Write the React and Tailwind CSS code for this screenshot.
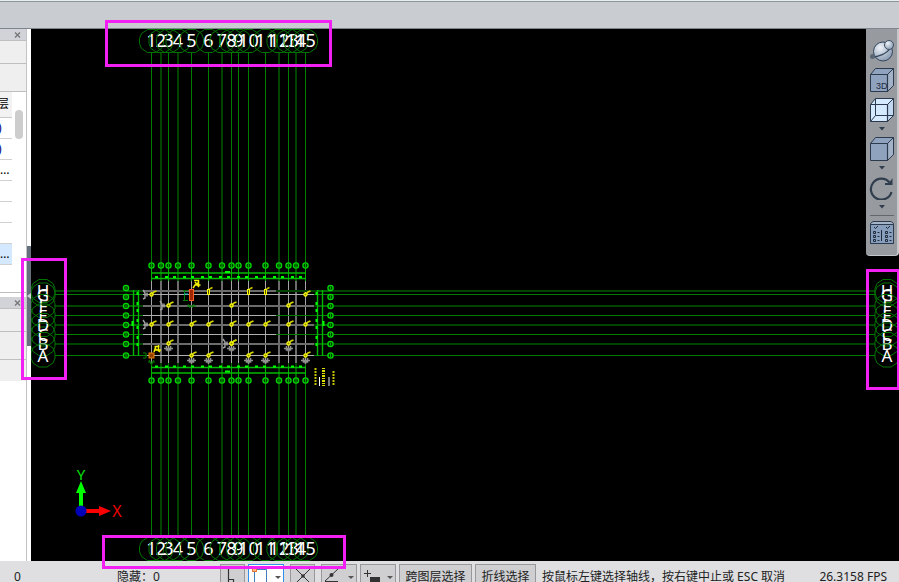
import React from "react";

const AXES_X = [
  { x: 151.5, name: "1" },
  { x: 161, name: "2", dim: true },
  { x: 168.5, name: "3" },
  { x: 178, name: "4", dim: true },
  { x: 191.5, name: "5" },
  { x: 208.5, name: "6" },
  { x: 222, name: "7", dim: true },
  { x: 231.5, name: "8" },
  { x: 238.5, name: "9" },
  { x: 248.5, name: "10" },
  { x: 265.5, name: "11" },
  { x: 279, name: "12", dim: true },
  { x: 288.5, name: "13" },
  { x: 296, name: "14", dim: true },
  { x: 305.5, name: "15" },
];

const AXES_Y = [
  { y: 291, name: "H", bubble: 288, dim: true },
  { y: 294.5, name: "G", bubble: 297 },
  { y: 306, name: "F", bubble: 306, dim: true },
  { y: 315.5, name: "E", bubble: 315.5 },
  { y: 325, name: "D", bubble: 325, dim: true },
  { y: 334.5, name: "C", bubble: 334.5 },
  { y: 344, name: "B", bubble: 344, dim: true },
  { y: 355.5, name: "A", bubble: 355.5 },
];

const COLUMNS = [
  [151, 294, "left"], [168, 305, "left"], [151, 324, "left"],
  [168, 324], [191, 324], [208, 324], [168, 343, "below"],
  [191, 355, "below"], [208, 355, "below"],
  [231, 305], [288, 305], [231, 324], [248, 324], [265, 324],
  [288, 324], [305, 324], [305, 294], [231, 343, "below"], [231, 343, "left"],
  [288, 343, "below"], [248, 355, "below"], [265, 355, "below"], [305, 355, "below"],
];

function AxisBubble({ cx, cy, name, size = 18 }) {
  return (
    <g>
      <text x={cx} y={cy + 6} fontSize={size} textAnchor="middle" fill="#ffffff">{name}</text>
      <path
        d={`M${cx - 4} ${cy - 11.5}h8l6 4l2 5v5l-2 5l-6 4h-8l-6 -4l-2 -5v-5l2 -5Z`}
        fill="none"
        stroke="#007400"
      />
    </g>
  );
}

function Dot({ cx, cy }) {
  return (
    <g>
      <circle cx={cx} cy={cy} r="2.6" fill="#003800" stroke="#00d800" strokeWidth="1.3" />
      <path d={`M${cx} ${cy - 1.5}v3`} stroke="#00b000" />
    </g>
  );
}

function Column({ x, y, side }) {
  return (
    <g>
      {side === "left" && (
        <path d={`M${x - 8} ${y - 4}l2 3v5l-2 1M${x - 7} ${y + 0.5}h4M${x - 4} ${y - 1.5}v4`} stroke="#a0a0a0" fill="none" strokeWidth="1.4" />
      )}
      {side === "below" && (
        <path d={`M${x - 4} ${y + 5.5}h9M${x - 1.5} ${y + 3}v4h4v-4M${x + 0.5} ${y + 5}v4`} stroke="#909090" fill="none" strokeWidth="1.6" />
      )}
      <path d={`M${x + 1} ${y}l2 -2l2.5 -1`} stroke="#d8d800" fill="none" strokeWidth="1.6" />
      <circle cx={x + 0.5} cy={y + 0.5} r="1.6" fill="#8c8c00" stroke="#ffff00" strokeWidth="1.2" />
    </g>
  );
}

function FloorPlan() {
  return (
    <g>
      {AXES_X.map((a) => (
        <g key={a.name}>
          <path d={`M${a.x} 53V537`} stroke={a.dim ? "#004400" : "#007c00"} strokeWidth={a.dim ? 2 : 1} />
          <path d={`M${a.x} 268V282M${a.x} 366V378`} stroke={a.dim ? "#007000" : "#00b400"} />
          <path d={`M${a.x} 281V363`} stroke={a.dim ? "#6c6c6c" : "#a4a4a4"} strokeWidth={a.dim ? 2 : 1} />
        </g>
      ))}
      {AXES_Y.map((a) => (
        <g key={a.name}>
          <path d={`M55 ${a.y}H875`} stroke={a.dim ? "#004400" : "#007c00"} strokeWidth={a.dim ? 2 : 1} />
          <path d={`M126 ${a.y}H139M317 ${a.y}H330`} stroke="#008c00" fill="none" />
          <path
            d={`M143 ${a.y}H${a.name === "E" || a.name === "C" || a.name === "H" ? 276 : 314}`}
            stroke={a.dim ? "#6c6c6c" : "#b0b0b0"}
            strokeWidth={a.dim ? 2 : 1}
          />
        </g>
      ))}
      <path d="M151 273H306M151 278.5H306M151 367.5H306M151 373H306" stroke="#00b800" strokeWidth="1.4" />
      <path d="M133.5 290V356M138.5 290V356M317.5 290V356M322.5 290V356" stroke="#00b800" strokeWidth="1.4" />
      <path d="M155 277h149M155 366.5h149" stroke="#00ff00" strokeWidth="2" strokeDasharray="3 7 3 5" />
      <path d="M137.5 292v61M316.5 292v61" stroke="#00ff00" strokeWidth="2" strokeDasharray="3 7 3 4" />
      <path d="M225 272h5M225 371.5h5M132.5 321v5M323.5 321v5" stroke="#00ff00" strokeWidth="2" />
      {AXES_X.map((a) => <Dot key={"t" + a.name} cx={a.x} cy={265.5} />)}
      {AXES_X.map((a) => <Dot key={"b" + a.name} cx={a.x} cy={380.5} />)}
      {AXES_Y.map((a) => <Dot key={"l" + a.name} cx={126} cy={a.bubble} />)}
      {AXES_Y.map((a) => <Dot key={"r" + a.name} cx={330.5} cy={a.bubble} />)}
      {COLUMNS.map(([x, y, side], i) => <Column key={i} x={x} y={y} side={side} />)}
      {[208.5, 248.5, 265.5].map((x) => (
        <g key={x}>
          <rect x={x - 1} y="289.5" width="2" height="5" fill="#555500" stroke="#ffff00" />
          <path d={`M${x + 1} 289l3 -1.5`} stroke="#c8c800" strokeWidth="1.4" />
        </g>
      ))}
      <rect x="189.5" y="289.5" width="4" height="11" fill="#a02800" stroke="#ff5a20" />
      <path d="M184.5 290v10M183 290.5h5M183 300.5h5M187 306h9M188 304l2 4M194 304l-2 4" stroke="#008000" fill="none" />
      <path d="M184 294h4" stroke="#00c8c8" />
      <path d="M193 288l2 -3l4 -3M194 280.5h5M195 282l4 5M198.5 280v6M194.5 285h6" stroke="#f0f000" fill="none" strokeWidth="1.5" />
      <rect x="149" y="353" width="5" height="5" fill="#904000" stroke="#f08000" />
      <path d="M143 353h3v5h-3M143 355.5h4M148 362h7M149 360l2 4M154 360l-2 4" stroke="#008000" fill="none" />
      <path d="M154 352l2 -6M154.5 346.5h5M156 349l4 3M158.5 345v6M155 350h6" stroke="#f0f000" fill="none" strokeWidth="1.5" />
      <path d="M315.5 368v18M333.5 371v15" stroke="#c4c400" strokeWidth="2" strokeDasharray="2 1" />
      <path d="M323.5 368v18" stroke="#e0e000" strokeWidth="3" strokeDasharray="1 1 2 1" />
      <path d="M319.5 377v9" stroke="#ffffff" />
      <path d="M329 377v9" stroke="#777777" strokeWidth="2" />
    </g>
  );
}

function Drawing() {
  return (
    <svg
      className="block h-full w-full"
      role="img"
      aria-label="轴网平面图"
      fontFamily="'Noto Sans', 'Open Sans', sans-serif"
    >
      <g transform="translate(-31 -29)">
        <FloorPlan />
        {AXES_X.map((a) => <AxisBubble key={"n" + a.name} cx={a.x} cy={41} name={a.name} />)}
        {AXES_X.map((a) => <AxisBubble key={"s" + a.name} cx={a.x} cy={549} name={a.name} />)}
        {AXES_Y.map((a) => <AxisBubble key={"w" + a.name} cx={43} cy={a.y} name={a.name} size={17} />)}
        {AXES_Y.map((a) => <AxisBubble key={"e" + a.name} cx={887} cy={a.y} name={a.name} size={17} />)}
        <path d="M79 507V493H76L81 481L86 493H83V507Z" fill="#00ff00" />
        <path d="M85 509H99V506L111 511L99 516V513H85Z" fill="#ff0000" />
        <circle cx="81" cy="511" r="5.5" fill="#0000b8" />
        <text x="81" y="480" fontSize="15" textAnchor="middle" fill="#00e000">Y</text>
        <text x="117" y="517" fontSize="16" textAnchor="middle" fill="#f00000">X</text>
      </g>
    </svg>
  );
}

function Caret() {
  return (
    <svg width="8" height="4" viewBox="0 0 8 4" className="shrink-0"><path d="M1 0H7L4 3.5Z" fill="#303d4d" /></svg>
  );
}

function Cube({ open, label }) {
  return (
    <svg width="26" height="26" viewBox="0 0 26 26">
      <path d="M1.5 7.5L6.5 1.5H24.5V18.5L18.5 24.5H1.5Z" fill={open ? "#d6eaff" : "#8fa3bf"} stroke="#2c3a4e" />
      <path d="M18.5 7.5L24.5 1.5V18.5L18.5 24.5Z" fill={open ? "#c2d8f0" : "#a3b2c6"} stroke="#2c3a4e" />
      <path d="M1.5 7.5H18.5V24.5" fill="none" stroke="#2c3a4e" strokeWidth="1.2" />
      {open && <path d="M6.5 1.5V18.5H24.5M6.5 18.5L1.5 24.5" fill="none" stroke="#2c3a4e" />}
      {label && <text x="7" y="22" fontSize="9" fontFamily="'Liberation Sans', sans-serif" fill="#1f2b3a">3D</text>}
    </svg>
  );
}

function ToolButton({ label, height, children }) {
  return (
    <button aria-label={label} className={`flex w-full items-center justify-center ${height}`}>{children}</button>
  );
}

function ViewToolbar() {
  return (
    <div className="absolute right-0 top-0 flex w-[33px] flex-col items-center rounded-b-sm border-r-2 border-b border-[#c5c7ca] bg-[#979a9f] pt-2">
      <ToolButton label="动态观察" height="h-7">
        <svg width="26" height="24" viewBox="0 0 26 24">
          <defs>
            <radialGradient id="ball" cx="35%" cy="30%" r="75%">
              <stop offset="0" stopColor="#eef3f9" />
              <stop offset="1" stopColor="#8799b0" />
            </radialGradient>
          </defs>
          <circle cx="14" cy="12.5" r="9.5" fill="url(#ball)" stroke="#34465c" />
          <path d="M3 18C9 18 18 15 22 8" fill="none" stroke="#34465c" strokeWidth="1.3" />
          <circle cx="3.5" cy="17.5" r="2.5" fill="#596674" />
          <circle cx="20" cy="6" r="4.5" fill="url(#ball)" stroke="#3e5066" />
        </svg>
      </ToolButton>
      <ToolButton label="三维视图" height="h-[30px]"><Cube label /></ToolButton>
      <ToolButton label="线框显示" height="h-[30px]"><Cube open /></ToolButton>
      <ToolButton label="更多显示方式" height="h-2"><Caret /></ToolButton>
      <ToolButton label="实体显示" height="h-[31px]"><Cube /></ToolButton>
      <ToolButton label="更多实体显示" height="h-2"><Caret /></ToolButton>
      <ToolButton label="旋转" height="h-[31px]">
        <svg width="26" height="24" viewBox="0 0 26 24">
          <path d="M20.5 6.5A10.5 10.5 0 1 0 22.5 16" fill="none" stroke="#303d4d" strokeWidth="2.2" />
          <path d="M23.5 2V9H16V7H20Z" fill="#303d4d" />
        </svg>
      </ToolButton>
      <ToolButton label="更多旋转方式" height="h-2"><Caret /></ToolButton>
      <div className="mt-1 h-px w-6 bg-[#63676c]" />
      <ToolButton label="显示设置" height="h-8">
        <svg width="26" height="24" viewBox="0 0 26 24">
          <path d="M1.5 3.5L4 1.5H22L24.5 3.5V23.5H1.5Z" fill="#a6b4c7" stroke="#2c3a4e" />
          <path d="M1.5 4.5H24.5V23.5H1.5Z" fill="#879ebd" stroke="#2c3a4e" />
          <path d="M5 7l1.5 1.5L9 6M17 7l1.5 1.5L21 6M12.5 10v11M8.5 12.5h2M8.5 16.5h2M8.5 20.5h2M20.5 12.5h2M20.5 16.5h2M20.5 20.5h2" fill="none" stroke="#1f2b3a" />
          <path d="M4.5 11.5h2v2h-2zM4.5 15.5h2v2h-2zM4.5 19.5h2v2h-2zM16.5 11.5h2v2h-2zM16.5 15.5h2v2h-2zM16.5 19.5h2v2h-2z" fill="none" stroke="#1f2b3a" />
        </svg>
      </ToolButton>
      <div className="h-[7px]" />
    </div>
  );
}

function PanelTitle() {
  return (
    <div className="flex h-3 shrink-0 items-center justify-end border-b border-[#bfbfbf] bg-[#d2d3d9]">
      <button aria-label="关闭" className="flex h-3 w-3 items-center justify-start">
        <svg width="7" height="6" viewBox="0 0 7 6"><path d="M1 0.5L6 5.5M6 0.5L1 5.5" stroke="#777777" strokeWidth="1.4" /></svg>
      </button>
    </div>
  );
}

const ROWS = ["paren", "paren", "dots", "", "", "", "selected"];

function Sidebar() {
  return (
    <aside className="flex w-[27px] shrink-0 flex-col overflow-hidden border-r border-[#c3c3c3] bg-white">
      <PanelTitle />
      <div className="h-[23px] border-b border-[#bfbfbf] bg-[#efefef]" />
      <div className="h-7 border-b border-[#bfbfbf] bg-[#efefef]" />
      <div className="flex h-[201px] shrink-0 border-b border-[#bfbfbf]">
        <table className="w-3 table-fixed border-collapse self-start">
          <thead>
            <tr className="h-[25px] border-b border-[#c8c8c8] bg-[#f2f2f2]">
              <th className="p-0 font-normal"><div className="flex justify-end pr-[3px]">层</div></th>
            </tr>
          </thead>
          <tbody>
            {ROWS.map((r, i) => (
              <tr key={i} className={`h-[21px] border-b border-[#d0d0d0] ${r === "selected" ? "bg-[#d4e9ff]" : ""}`}>
                <td className="p-0 leading-4">
                  {r === "paren" && <div className="-ml-0.5 text-[#000080]">)</div>}
                  {(r === "dots" || r === "selected") && <div className="text-black">…</div>}
                </td>
              </tr>
            ))}
          </tbody>
        </table>
        <div className="ml-[3px] mt-[18px] h-[29px] w-2 rounded-full bg-[#cdcdcd]" />
      </div>
      <div className="h-1 shrink-0" />
      <PanelTitle />
      <div className="h-[23px] border-b border-[#bfbfbf] bg-[#efefef]" />
      <div className="h-7 border-b border-[#bfbfbf] bg-[#efefef]" />
      <div className="h-[21px] bg-[#efefef]" />
    </aside>
  );
}

function StatusButton({ label, width, active, children }) {
  return (
    <button
      aria-label={label}
      className={`flex h-[25px] shrink-0 items-center justify-center border ${width} ${active ? "border-[#2f8fef] bg-white" : "border-[#98989c] bg-[#cfcfd2]"}`}
    >
      {children}
    </button>
  );
}

function StatusBar() {
  return (
    <footer className="flex h-[21px] shrink-0 items-start overflow-hidden whitespace-nowrap bg-[#dfdfe1] pt-[3px] leading-[25px] text-[#222222]">
      <span className="w-[117px] shrink-0 pl-3.5">0</span>
      <span className="w-[103px] shrink-0">隐藏：0</span>
      <div className="flex shrink-0 gap-[3px]">
        <StatusButton label="正交" width="w-[25px]">
          <svg width="16" height="18" viewBox="0 0 16 18"><path d="M3.5 1V15.5H15M3.5 11.5H8.5V15.5" fill="none" stroke="#333333" strokeWidth="1.2" /></svg>
        </StatusButton>
        <StatusButton label="对象捕捉" width="w-9" active>
          <svg width="32" height="23" viewBox="0 0 32 23">
            <path d="M4.5 4.5H16.5V22M4.5 4.5V22" fill="none" stroke="#3e7ebd" />
            <rect x="2.5" y="2.5" width="4" height="4" fill="#ffb080" stroke="#e07838" />
            <path d="M25 11h6l-3 3Z" fill="#555555" />
          </svg>
        </StatusButton>
        <div className="w-0" />
        <StatusButton label="交点捕捉" width="w-[25px]">
          <svg width="18" height="17" viewBox="0 0 18 17"><path d="M2 1L16 15M16 1L2 15" stroke="#333333" /><circle cx="9" cy="8" r="1.8" fill="#333333" /></svg>
        </StatusButton>
        <div className="w-0" />
        <StatusButton label="中点捕捉" width="w-9">
          <svg width="32" height="19" viewBox="0 0 32 19"><path d="M2 14L15 2M2 14.5H15" stroke="#333333" fill="none" /><circle cx="8.5" cy="8" r="2" fill="#333333" /><path d="M25 9h6l-3 3Z" fill="#555555" /></svg>
        </StatusButton>
        <StatusButton label="动态输入" width="w-9">
          <svg width="32" height="23" viewBox="0 0 32 23"><path d="M2 8.5H9M5.5 5V12" stroke="#333333" fill="none" /><rect x="8" y="12" width="10" height="6" fill="#333333" /><path d="M25 11h6l-3 3Z" fill="#555555" /></svg>
        </StatusButton>
        <StatusButton label="跨图层选择" width="w-[73px]">跨图层选择</StatusButton>
        <StatusButton label="折线选择" width="w-[61px]">折线选择</StatusButton>
      </div>
      <span className="ml-1.5 shrink-0">按鼠标左键选择轴线，按右键中止或 ESC 取消</span>
      <span className="ml-auto shrink-0 pr-3">26.3158 FPS</span>
    </footer>
  );
}

export default function App() {
  return (
    <div className="relative flex h-screen flex-col overflow-hidden bg-white font-['Noto_Sans','Noto_Sans_CJK_SC',sans-serif] text-[12px]">
      <header className="h-[29px] shrink-0 border-b border-[#7f858c] bg-[#e6eef0] pt-px">
        <div className="h-full border-t border-[#8f9498] bg-[#c9ccd1]" />
      </header>
      <main className="flex min-h-0 flex-1">
        <Sidebar />
        <div className="flex w-1 shrink-0 flex-col bg-white pt-[217px]">
          <button aria-label="折叠面板" className="flex h-[100px] items-center justify-center bg-[#66707c]">
            <svg width="4" height="6" viewBox="0 0 4 6"><path d="M4 0V6L0 3Z" fill="#d0d3d6" /></svg>
          </button>
        </div>
        <section className="relative min-w-0 flex-1 overflow-hidden bg-black">
          <Drawing />
          <ViewToolbar />
        </section>
      </main>
      <StatusBar />
      <div className="pointer-events-none absolute left-[105px] top-5 h-[47px] w-[227px] border-[3px] border-[#f320f3]" />
      <div className="pointer-events-none absolute left-[21px] top-[258px] h-[122px] w-[46px] border-[3px] border-[#f320f3]" />
      <div className="pointer-events-none absolute right-[-1px] top-[269px] h-[121px] w-[34px] border-[3px] border-[#f320f3]" />
      <div className="pointer-events-none absolute bottom-[13px] left-[102px] h-[34px] w-[244px] border-[3px] border-[#f320f3]" />
    </div>
  );
}
